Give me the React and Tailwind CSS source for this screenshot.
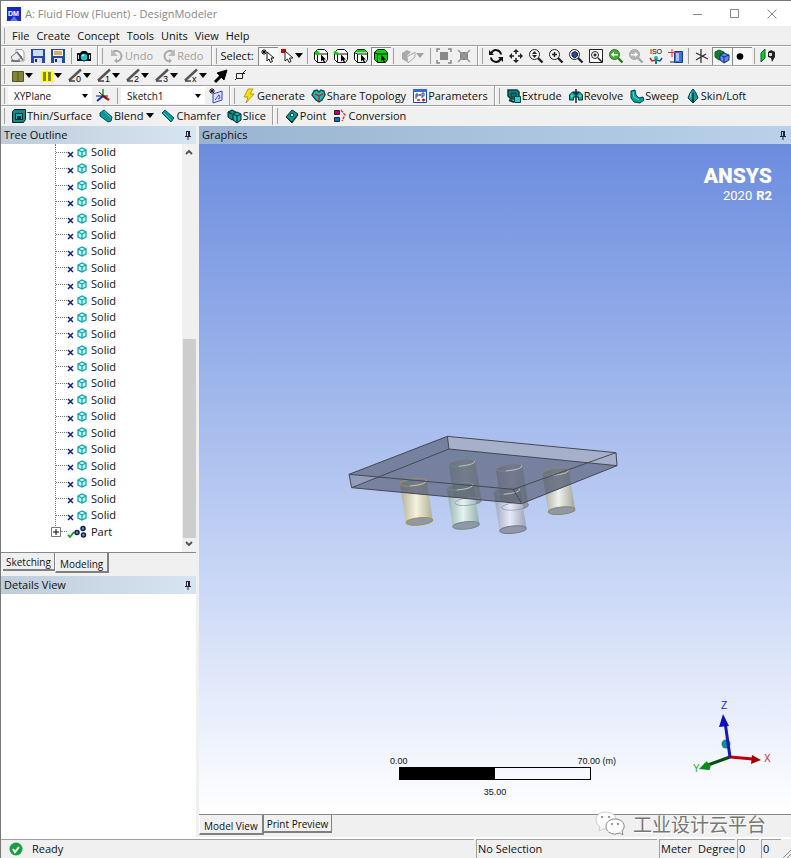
import React, { useState } from 'react';
import clsx from 'clsx';

const Icon = ({ children, size = 16 }) => (
  <svg width={size} height={size} viewBox="0 0 16 16" fill="none" aria-hidden="true" className="shrink-0">
    {children}
  </svg>
);

const Caret = ({ color = '#000' }) => (
  <svg width="8" height="5" viewBox="0 0 8 5" aria-hidden="true" className="shrink-0">
    <path d="M0 0h8L4 5z" fill={color} />
  </svg>
);

const Lens = ({ children, color = '#222', fill = '#f8f8f8' }) => (
  <Icon>
    <path d="M10 10l4.5 4.5" stroke={color} strokeWidth="2.4" />
    <circle cx="6.5" cy="6.5" r="5" fill={fill} stroke={color} />
    {children}
  </Icon>
);

const CubeSelect = ({ mode }) => (
  <Icon>
    <path d="M1.5 4.5l3-3h7l3 3v7l-2 3h-8l-3-3z" fill={mode === 'body' ? '#00d800' : '#fff'} stroke="#111" />
    {mode === 'face' && <path d="M2 4L4.500 2h7l2.500 2.500H5z" fill="#00e000" />}
    <path d="M1.500 4.500l3 1.500h10M4.500 6v8.500" stroke="#111" />
    {mode === 'vertex' && <circle cx="4" cy="5" r="2.200" fill="#00d800" />}
    {mode === 'edge' && <path d="M1 4l4 2" stroke="#00d800" strokeWidth="3" />}
    <path d="M8 6.500v7l1.500-1.500 1.500 2.500 1-.5-1-2.500h2z" fill="#000" />
  </Icon>
);

const LineIcon = ({ label }) => (
  <Icon>
    <path d="M1 12.500L13 1.500" stroke="#555" strokeWidth="2.400" />
    <path d="M1 13h6" stroke="#444" strokeWidth="1.500" />
    <text x="8" y="14" fontSize="9" fontFamily="Liberation Sans, sans-serif" fill="#000">{label}</text>
  </Icon>
);

const icons = {
  newSketch: <Icon><path d="M6 1.500h6l2 2.500v9H6z" fill="#fff" stroke="#99a" /><path d="M1 9l6-5 5 5-5 4H3z" fill="#eaeaf0" stroke="#777" /><path d="M7 4l6 8M1 13h9" stroke="#666" strokeWidth="1.500" /></Icon>,
  save: <Icon><path d="M1 1h14v14H1z" fill="#2449a8" /><path d="M3 2h10v6H3z" fill="#c9dcf6" /><path d="M4 10h8v5H4z" fill="#dde" /><path d="M5 11h2v3H5z" fill="#234" /></Icon>,
  saveAs: <Icon><path d="M1 1h14v14H1z" fill="#2449a8" /><path d="M3 2h10v6H3z" fill="#fff3d2" /><path d="M4 4h8M4 6h8" stroke="#b65a28" /><path d="M4 10h8v5H4z" fill="#dde" /><path d="M5 11h2v3H5z" fill="#234" /></Icon>,
  camera: <Icon><path d="M1 5h3l2-2h4l2 2h3v8H1z" fill="#111" /><circle cx="8" cy="9" r="4" fill="#16c6cf" stroke="#000" /><path d="M6 8l2-1" stroke="#fff" /><path d="M2.500 7v4M13.500 7v4" stroke="#ddd" /></Icon>,
  undo: <Icon><path d="M4 4a5.300 5.300 0 1 1 3 9.500" stroke="#aaa" strokeWidth="2" /><path d="M2 1v7h7z" fill="#bbb" /><path d="M8 10l-3 3 3 2z" fill="#aaa" /></Icon>,
  redo: <Icon><path d="M12 4a5.300 5.300 0 1 0-3 9.500" stroke="#aaa" strokeWidth="2" /><path d="M14 1v7H7z" fill="#bbb" /><path d="M8 10l3 3-3 2z" fill="#aaa" /></Icon>,
  selectMode: <Icon><path d="M4 1v6M1 4h6M2 2l4 4M6 2L2 6" stroke="#000" /><path d="M7 4v9l2-2 1.500 3.500 2-1L11 10h3z" fill="#fff" stroke="#111" /></Icon>,
  pick: <Icon><path d="M1 1h5v4H1z" fill="#d00000" /><path d="M5 3v10l2.500-2L9 14.500l2-1L9.500 10H13z" fill="#fff" stroke="#222" /></Icon>,
  extend: <Icon><path d="M1 5l5-3 4 2-4 4v6l-5-3z" fill="#aaa" /><path d="M6 9l8-5v5l-7 6z" fill="#eee" stroke="#aaa" /></Icon>,
  blockA: <Icon><path d="M4 4h8v8H4z" fill="#888" /><path d="M1 4V1h3M12 1h3v3M15 12v3h-3M4 15H1v-3" stroke="#888" strokeWidth="1.500" /></Icon>,
  blockB: <Icon><path d="M4 4h8v8H4z" fill="#888" /><path d="M2 2l12 12M14 2L2 14" stroke="#999" strokeWidth="1.500" /></Icon>,
  rotate: <Icon><path d="M13 6.500A5 5 0 0 0 3.500 5M3 9.500A5 5 0 0 0 12.500 11" stroke="#111" strokeWidth="2" /><path d="M1 2v5h5zM15 14V9h-5z" fill="#111" /></Icon>,
  pan: <Icon><path d="M8 3v3M8 10v3M3 8h3M10 8h3" stroke="#222" strokeWidth="1.500" /><path d="M8 1l3 3H5zM8 15l3-3H5zM1 8l3-3v6zM15 8l-3-3v6z" fill="#222" /></Icon>,
  zoom: <Lens><path d="M6.500 3L9 6H4zM6.500 10L4 7h5z" fill="#222" /></Lens>,
  zoomIn: <Lens><path d="M6.500 4v5M4 6.500h5" stroke="#222" strokeWidth="1.500" /></Lens>,
  zoomFit: <Lens><path d="M4 5l3-1.500L9.500 5v3L6.500 10 4 8z" fill="#2749ad" stroke="#123" /></Lens>,
  zoomBox: <Icon><path d="M1.500 1.500h13v13h-13z" fill="#fff" stroke="#222" /><circle cx="7" cy="7" r="3.500" stroke="#222" /><path d="M5.500 7h3M7 5.500v3M10 10l4 4" stroke="#222" strokeWidth="1.500" /></Icon>,
  prev: <Lens color="#287d20" fill="#4aa83d"><path d="M3 6.500L6 4v2h4v1.500H6V9z" fill="#fff" /></Lens>,
  next: <Lens color="#a5a5a5" fill="#b5b5b5"><path d="M10 6.500L7 4v2H3v1.500h4V9z" fill="#fff" /></Lens>,
  iso: <Icon><text x="2" y="6" fontSize="7" fontFamily="Liberation Sans, sans-serif" fill="#000">ISO</text><path d="M8 12l-4 1-2-3" stroke="#cc2020" strokeWidth="1.500" /><path d="M8 12l4 1 2-3" stroke="#2040c0" strokeWidth="1.500" /><circle cx="8" cy="10" r="2" fill="#11b8aa" /><path d="M8 11v5" stroke="#087" strokeWidth="2" /></Icon>,
  lookAt: <Icon><path d="M6.500 3.500h8v11h-8z" fill="#4a70ce" stroke="#123a9a" /><path d="M8 5h3v8H8z" fill="#a9c2f2" /><path d="M4 1v8M0 4.500h9" stroke="#d33" /><path d="M2 14h5" stroke="#222" /></Icon>,
  axes: <Icon><path d="M7 1v14M2 12l10-6M2 5l12 6" stroke="#333" strokeWidth="1.300" /></Icon>,
  bodies: <Icon><path d="M1 4l4-2 5 2v6l-5 2-4-3z" fill="#157b2c" stroke="#062" /><path d="M6 7l4-2 5 2v5l-5 3-4-3z" fill="#5d8be8" stroke="#102e7e" /><path d="M6 7l4 2 5-2M10 9v6" stroke="#102e7e" /></Icon>,
  dot: <Icon><circle cx="6" cy="8.500" r="3.300" fill="#000" /></Icon>,
  faces: <Icon><path d="M1 5l4-4v9l-4 4z" fill="#12cc20" stroke="#153" /><path d="M8 4l3-2 4 2v5l-3 5-1-4-3-1z" fill="#222" /><path d="M9 5h3v3H9z" fill="#ddd" /></Icon>,
  plane: <Icon><path d="M8 8V1" stroke="#10a020" strokeWidth="1.500" /><path d="M8 8l-6 5" stroke="#1030d0" strokeWidth="2" /><path d="M8 8l6 4" stroke="#e01010" strokeWidth="2.500" /><path d="M4 4l8 7M1 8h12" stroke="#222" /></Icon>,
  sketchNew: <Icon><path d="M5 6l9-3v9l-9 3z" fill="#dfe3ff" stroke="#3640cc" /><path d="M7 12l4-5M10 7a2 2 0 1 1 0 4" stroke="#3640cc" /><path d="M4 0v6M1 3h6M2 1l4 4M6 1L2 5" stroke="#111" /></Icon>,
  generate: <Icon><path d="M7 1h5L9 6h4l-8 9 2-6H3z" fill="#ffdf00" stroke="#9b8000" strokeWidth=".7" /></Icon>,
  share: <Icon><path d="M3 3l3-1 2 2 2-2 3 1 1 4-3 5-3 2-3-2-4-5z" fill="#16c0bb" stroke="#034c50" strokeWidth="1.400" /><path d="M4 6l4 2 4-2M8 8v5" stroke="#d02020" strokeWidth="1.500" /></Icon>,
  params: <Icon><path d="M1.500 1.500h13v13h-13z" fill="#fff" stroke="#1745c0" /><path d="M1 1h14v3H1z" fill="#3468dc" /><path d="M4 11V6h2v2H4M10 10V5h2v3h-2" stroke="#1745c0" /><path d="M7 7h2M5 12h3M10 12h3M11.500 10.500v3" stroke="#d01010" strokeWidth="1.500" /></Icon>,
  extrude: <Icon><path d="M2 2h9l2 2v7H5l-3-3z" fill="#0b8585" stroke="#013b3b" strokeWidth="1.500" /><path d="M5 5h5v4H5z" fill="#087070" stroke="#013b3b" /><path d="M8.500 8.500h6v6h-6z" fill="#19d5d5" stroke="#013b3b" /><path d="M3 12l5 2" stroke="#013b3b" strokeWidth="2" /></Icon>,
  revolve: <Icon><path d="M1.500 12V7l3-3h7l3 3v5h-4V9h-5v3z" fill="#0eb0b0" stroke="#034" /><path d="M8 1v14M5 4l3 3 3-3" stroke="#033" strokeWidth="1.500" /><path d="M3 8h2M11 8h2" stroke="#7ff" /></Icon>,
  sweep: <Icon><path d="M2 3l4-1 1 5 3 3 4-1 1 3-4 3-6-1-3-4z" fill="#0e9c9c" stroke="#034040" /><path d="M4 4l1 5 5 3" stroke="#4ee" /></Icon>,
  loft: <Icon><path d="M8 1l3 4 2 5-5 5-5-5 2-5z" fill="#0e9c9c" stroke="#034040" /><path d="M8 5v10" stroke="#023" strokeWidth="1.500" /><path d="M6 5l-1 5" stroke="#6ee" /></Icon>,
  thin: <Icon><path d="M1.500 3.500l2-2h11v10l-2 3h-11z" fill="#0e8c8c" stroke="#022" /><path d="M4.500 5.500h7v6h-7z" fill="#13b5b5" stroke="#022" /><path d="M6 8h4v3H6z" fill="#034" /></Icon>,
  blend: <Icon><path d="M2 5l4-3 8 7-1 4-3 1-8-6z" fill="#129797" stroke="#056" /><path d="M6 3l7 7" stroke="#3cc" /></Icon>,
  chamfer: <Icon><path d="M2 5l3-3 9 8-3 4z" fill="#129797" stroke="#056" /><path d="M4 5l7 7" stroke="#3cc" /></Icon>,
  slice: <Icon><path d="M1 4l4-2 4 2v6l-4 2-4-3z" fill="#0e8c8c" stroke="#022" /><path d="M6 6l4-2 4 2v6l-4 3-4-3z" fill="#15b5b5" stroke="#022" /><path d="M6 6l4 2 4-2M10 8v7M1 4l4 2" stroke="#022" /></Icon>,
  point: <Icon><path d="M2 9l6-7 6 4-6 8z" fill="#129797" stroke="#033" /><path d="M3 10l5 5 6-8" stroke="#033" /><circle cx="8" cy="7" r="1.800" fill="#bff" stroke="#033" /></Icon>,
  conversion: <Icon><path d="M1.500 2.500h5v4h-5z" fill="#c00070" stroke="#222" /><path d="M1.500 9.500h5v4h-5z" fill="#0870d0" stroke="#222" /><path d="M8 2l4 5-3 6" stroke="#f02020" strokeWidth="1.300" strokeDasharray="3 1" /></Icon>,
  vertex: <CubeSelect mode="vertex" />,
  edge: <CubeSelect mode="edge" />,
  face: <CubeSelect mode="face" />,
  body: <CubeSelect mode="body" />,
  faceColor: <Icon><path d="M2.500 3.500h11v10h-11z" fill="#85853a" stroke="#55551a" /><path d="M8 3v11" stroke="#55551a" /></Icon>,
  edgeColor: <Icon><path d="M2 3h12v11H2z" fill="#ff0" /><path d="M4 4h3v9H4zM9 4h3v9H9z" fill="#85853a" /></Icon>,
  line0: <LineIcon label="0" />,
  line1: <LineIcon label="1" />,
  line2: <LineIcon label="2" />,
  line3: <LineIcon label="3" />,
  lineX: <LineIcon label="x" />,
  arrow: <Icon><path d="M2 14l6-6" stroke="#000" strokeWidth="3" /><path d="M14 2l-3 10-3-3-4-4z" fill="#000" stroke="#000" /></Icon>,
  vertices: <Icon><path d="M3.500 5.500h6v5h-6zM9 6l4-4M4 10l-2 2M9 5.500h3" stroke="#222" /></Icon>,
};

const Separator = () => (
  <span className="flex h-4 w-[6px] shrink-0 justify-center"><span className="w-px bg-[#a0a0a0]" /></span>
);

const Handle = () => (
  <span className="mx-[3px] h-4 w-px shrink-0 bg-[#a0a0a0]" />
);

// end of one docked toolbar and the grip of the next
const Divider = () => (
  <span className="flex h-full shrink-0 items-center pl-[3px]">
    <span className="h-full w-[2px] border-l border-[#a0a0a0] bg-white" />
    <Handle />
  </span>
);

const ToolButton = ({ icon, label, text, drop, pressed, disabled }) => (
  <button
    type="button"
    aria-label={label || text}
    disabled={disabled}
    className={clsx(
      'flex h-[18px] shrink-0 items-center',
      text ? 'px-[3px]' : 'px-[2px]',
      pressed && 'bg-[#f8f8f8] shadow-[inset_1px_1px_0_#888]',
      disabled && 'text-[#a0a0a0]'
    )}
  >
    {icons[icon]}
    {text && <span>{text}</span>}
    {drop && <span className={clsx('flex', text ? 'pl-[3px]' : '-ml-px')}><Caret color={disabled ? '#a0a0a0' : '#000'} /></span>}
  </button>
);

const Toolbar = ({ label, children }) => (
  <div role="toolbar" aria-label={label} className="flex h-5 shrink-0 items-center overflow-hidden border-t border-[#a0a0a0] shadow-[inset_0_1px_0_#fff]">
    <Handle />
    {children}
  </div>
);

const PickList = ({ label, options }) => (
  <span className="relative flex h-[17px] w-[84px] shrink-0 items-center bg-white">
    <select aria-label={label} className="h-full w-full appearance-none bg-transparent pl-[6px] text-[10px] leading-4 outline-none">
      {options.map(o => <option key={o}>{o}</option>)}
    </select>
    <span className="pointer-events-none absolute right-1"><svg width="6" height="4" viewBox="0 0 6 4" aria-hidden="true"><path d="M0 0h6L3 4z" fill="#000" /></svg></span>
  </span>
);

const Pin = () => (
  <button type="button" aria-label="Auto hide">
    <svg width="8" height="10" viewBox="0 0 8 10" fill="none" aria-hidden="true">
      <path d="M2.500 1v5M5.500 1v5M2 1.500h4M1 6.500h6M4 7v3" stroke="#223" />
      <path d="M4.500 1v5" stroke="#223" />
    </svg>
  </button>
);

const PanelHeader = ({ title, active }) => (
  <div className={clsx(
    'flex h-[18px] shrink-0 items-center justify-between pl-[3px] pr-1',
    active ? 'bg-linear-to-r from-[#99b4d1] to-[#b9d1ea]' : 'bg-linear-to-r from-[#bfcddb] to-[#d7e4f2]'
  )}>
    <h2>{title}</h2>
    <Pin />
  </div>
);

const SolidRow = () => (
  <li className="flex flex-1 items-center">
    <span className="ml-[55px] w-[11px] border-t border-dotted border-[#777]" />
    <svg width="7" height="7" viewBox="0 0 7 7" fill="none" aria-hidden="true" className="mt-1">
      <path d="M1 1l5 5M6 1L1 6" stroke="#10208c" strokeWidth="1.500" />
    </svg>
    <svg width="10" height="11" viewBox="0 0 10 11" fill="none" aria-hidden="true" className="ml-[3px]">
      <path d="M1 3l4-2 4 2v5l-4 2-4-2z" fill="#c9ffff" stroke="#10a5ad" strokeWidth="1.300" />
      <path d="M1 3l4 2 4-2M5 5v5" stroke="#10a5ad" strokeWidth="1.300" />
    </svg>
    <span className="ml-1">Solid</span>
  </li>
);

const TreeOutline = () => (
  <div className="flex h-[409px] shrink-0 border-b border-[#888] bg-white">
    <div className="relative flex-1">
      <span className="absolute left-[54px] top-0 h-[382px] border-l border-dotted border-[#777]" />
      <ul className="flex h-[396px] flex-col">
        {Array.from({ length: 23 }, (_, i) => <SolidRow key={i} />)}
        <li className="flex flex-1 items-center">
          <button type="button" aria-label="Expand Part" className="relative ml-[50px] flex">
            <svg width="10" height="10" viewBox="0 0 10 10" aria-hidden="true">
              <path d="M.5.5h9v9h-9z" fill="#fff" stroke="#777" /><path d="M2 5h6M5 2v6" stroke="#000" />
            </svg>
          </button>
          <span className="w-[6px] border-t border-dotted border-[#777]" />
          <svg width="20" height="14" viewBox="0 0 20 14" fill="none" aria-hidden="true">
            <path d="M1 10l2 2 4-5" stroke="#10a020" strokeWidth="1.800" />
            <g fill="#6d8fc8" stroke="#111f44" strokeWidth="1.500">
              <circle cx="10" cy="7.500" r="2" /><circle cx="16" cy="3.500" r="2" /><circle cx="16.500" cy="10" r="2" />
            </g>
          </svg>
          <span className="ml-1">Part</span>
        </li>
      </ul>
    </div>
    <div className="flex w-[14px] flex-col items-center bg-[#f0f0f0] py-1" aria-hidden="true">
      <svg width="8" height="8" viewBox="0 0 8 8" fill="none"><path d="M1 6l3-3 3 3" stroke="#505050" strokeWidth="1.800" /></svg>
      <span className="mt-[183px] w-[13px] flex-1 bg-[#cdcdcd]" />
      <svg width="8" height="8" viewBox="0 0 8 8" fill="none" className="mt-[2px]"><path d="M1 2l3 3 3-3" stroke="#505050" strokeWidth="1.800" /></svg>
    </div>
  </div>
);

const TabButton = ({ active, children, onClick }) => (
  <button
    type="button"
    role="tab"
    aria-selected={active}
    onClick={onClick}
    className={clsx(
      'border-b-2 border-[#808080] text-[10px]',
      active ? 'h-5 border-l border-r-2 border-l-white bg-[#f0f0f0] px-1 pt-[3px]' : 'h-[18px] border-r px-[3px] pt-px'
    )}
  >
    <span className="block leading-[14px]">{children}</span>
  </button>
);

// axis runs from the top cap centre to the bottom cap centre
const cylinders = [
  { x: 366, y: 113, fill: 'url(#green)', edge: '#6f8f80' },
  { x: 507, y: 127, fill: 'url(#violet)', edge: '#83808c' },
  { x: 220, y: 172, fill: 'url(#yellow)', edge: '#a09248' },
  { x: 360, y: 184, fill: 'url(#green)', edge: '#6f8f80' },
  { x: 501, y: 197, fill: 'url(#violet)', edge: '#77778c' },
  { x: 647, y: 140, fill: 'url(#sand)', edge: '#8c8560' },
];

const barrel = (x, y) =>
  `M${x - 40} ${y + 5}L${x - 22} ${y + 122}Q${x + 18} ${y + 134} ${x + 58} ${y + 112}L${x + 40} ${y - 5}Q${x} ${y - 17} ${x - 40} ${y + 5}Z`;

const Shade = ({ id, side, mid }) => (
  <linearGradient id={id}>
    <stop offset="0" stopColor={side} />
    <stop offset=".5" stopColor={mid} />
    <stop offset="1" stopColor={side} />
  </linearGradient>
);

const Model = () => (
  <svg width="290" height="120" viewBox="0 0 870 360" fill="none" role="img" aria-label="Solid model" className="absolute left-[141px] top-[281px]">
    <defs>
      <Shade id="green" side="#93aeb0" mid="#e4f4ee" />
      <Shade id="violet" side="#9ba1bb" mid="#e6eafa" />
      <Shade id="yellow" side="#b0ae94" mid="#f4f3df" />
      <Shade id="sand" side="#a3a69c" mid="#eef1ec" />
      <clipPath id="plate"><path d="M322 34L828 83 831 122 545 236 35 188 27 148z" /></clipPath>
    </defs>
    {cylinders.map(({ x, y, fill, edge }) => (
      <g key={x}>
        <path d={barrel(x, y)} fill={fill} />
        <ellipse cx={x + 18} cy={y + 117} rx="40" ry="11" transform={`rotate(-6 ${x + 18} ${y + 117})`} fill="#8f97a8" stroke={edge} strokeWidth="3" />
      </g>
    ))}
    <path d="M322 34L828 83 831 122 545 236 35 188 27 148z" fill="#676e88" fillOpacity=".78" />
    <path d="M322 34L828 83 831 122 327 72z" fill="#c8d0ea" fillOpacity=".6" />
    <path d="M27 148L116 156 35 188z" fill="#c8d0ea" fillOpacity=".35" />
    <g clipPath="url(#plate)">
      {cylinders.map(({ x, y }) => <path key={x} d={barrel(x, y)} fill="#5a6268" fillOpacity=".36" />)}
    </g>
    {cylinders.map(({ x, y, edge }) => (
      <g key={x}>
        <ellipse cx={x} cy={y} rx="40" ry="11" transform={`rotate(-6 ${x} ${y})`} stroke={edge} strokeWidth="2.500" />
        <path d={`M${x - 10} ${y + 11}Q${x + 42} ${y + 6} ${x + 38} ${y - 6}`} stroke="#c5cbc6" strokeWidth="2.500" />
      </g>
    ))}
    {cylinders.slice(0, 2).map(({ x, y }) => (
      <ellipse key={x} cx={x + 18} cy={y + 117} rx="40" ry="11" transform={`rotate(-6 ${x + 18} ${y + 117})`} stroke="#8a9294" strokeWidth="2" />
    ))}
    <path d="M322 34L828 83 831 122 545 236 35 188 27 148zM322 34l5 38 504 50M327 72L35 188M27 148L520 193 828 83M520 193l25 43" stroke="#454953" strokeWidth="3" />
  </svg>
);

const ScaleBar = () => (
  <div className="absolute left-[191px] top-[611px] w-[240px] font-[Liberation_Sans,sans-serif] text-[9px] leading-3">
    <div className="flex justify-between pr-[14px]"><span>0.00</span><span>70.00 (m)</span></div>
    <div className="ml-[9px] flex h-[13px] w-[192px] border border-black">
      <span className="w-1/2 bg-black" />
    </div>
    <p className="mt-[6px] w-[210px] text-center">35.00</p>
  </div>
);

const Triad = () => (
  <svg width="90" height="80" viewBox="0 0 90 80" fill="none" role="img" aria-label="Axis triad" className="absolute bottom-[34px] right-[14px] font-[Liberation_Sans,sans-serif]">
    <circle cx="39" cy="44" r="4.500" fill="#138a9a" />
    <path d="M43 57L21 65" stroke="#064d10" strokeWidth="3" />
    <path d="M43 57l23 2" stroke="#c00000" strokeWidth="3" />
    <path d="M43 57L38 22" stroke="#1818b8" strokeWidth="3" />
    <path d="M36 14l-4 13 10-1z" fill="#1010c0" />
    <path d="M74 60l-9-5-1 9z" fill="#a00000" />
    <path d="M12 69l8-8 3 9z" fill="#0a8a18" />
    <circle cx="20" cy="66" r="3.500" fill="#0a8a18" />
    <text x="34" y="9" fontSize="10" fill="#2020ff">Z</text>
    <text x="77" y="62" fontSize="10" fill="#e02020">X</text>
    <text x="6" y="72" fontSize="10" fill="#20b020">Y</text>
  </svg>
);

const Watermark = () => (
  <div className="pointer-events-none absolute bottom-[1px] right-[25px] flex items-center gap-2">
    <svg width="30" height="25" viewBox="0 0 30 25" aria-hidden="true">
      <path d="M11 1C5 1 1 4 1 9c0 3 2 5 4 7l-1 4 4-2c8 1 13-3 13-9 0-5-4-8-10-8z" fill="#fff" stroke="#ccc" />
      <path d="M20 8c-5 0-9 3-9 7.500S15 23 20 23l5-1 3 2-1-4c5-5 1-12-7-12z" fill="#fff" stroke="#888" />
      <g fill="#777"><circle cx="7" cy="6" r="1" /><circle cx="14" cy="6" r="1" /><circle cx="17" cy="13" r="1" /><circle cx="23" cy="13" r="1" /></g>
    </svg>
    <span className="font-['Noto_Sans_CJK_SC',sans-serif] text-[19px] leading-6 text-[#777] [text-shadow:1px_1px_0_#fff]">工业设计云平台</span>
  </div>
);

const menus = ['File', 'Create', 'Concept', 'Tools', 'Units', 'View', 'Help'];

const App = () => {
  const [outlineTab, setOutlineTab] = useState('Modeling');
  const [viewTab, setViewTab] = useState('Model View');

  return (
    <div className="flex min-h-screen flex-col overflow-hidden border-l border-t border-[#777] bg-[#f0f0f0] font-['Open_Sans',sans-serif] text-[11px] leading-4 text-[#111]">
      <header className="flex h-[25px] shrink-0 items-center bg-white pl-[6px] text-[#888]">
        <svg width="14" height="14" viewBox="0 0 14 14" aria-hidden="true">
          <path d="M0 0h14v14H0z" fill="#1428c8" /><path d="M3 14l4-5 4 5z" fill="#5a78f0" />
          <text x="1" y="9" fontSize="7" fontWeight="700" fontFamily="Liberation Sans, sans-serif" fill="#fff">DM</text>
        </svg>
        <h1 className="ml-1 flex-1">A: Fluid Flow (Fluent) - DesignModeler</h1>
        <div className="flex gap-[27px] pr-[14px]">
          <button type="button" aria-label="Minimize"><svg width="10" height="10" fill="none"><path d="M0 5.500h9" stroke="#888" /></svg></button>
          <button type="button" aria-label="Maximize"><svg width="10" height="10" fill="none"><path d="M.5.5h8v8h-8z" stroke="#888" /></svg></button>
          <button type="button" aria-label="Close"><svg width="10" height="10" fill="none"><path d="M.5.5l9 9M9.500.5l-9 9" stroke="#888" /></svg></button>
        </div>
      </header>

      <nav aria-label="Main menu" className="flex h-[19px] shrink-0 items-center">
        <Handle />
        <div className="flex gap-[7px] pl-1 pt-px">
          {menus.map(m => <button key={m} type="button">{m}</button>)}
        </div>
      </nav>

      <Toolbar label="Standard">
        <ToolButton icon="newSketch" label="New" />
        <ToolButton icon="save" label="Save" />
        <ToolButton icon="saveAs" label="Export" />
        <Separator />
        <ToolButton icon="camera" label="Capture" />
        <Divider />
        <div className="flex gap-[2px] pr-[2px]">
          <ToolButton icon="undo" text="Undo" disabled />
          <ToolButton icon="redo" text="Redo" disabled />
        </div>
        <Divider />
        <span className="mr-1">Select:</span>
        <ToolButton icon="selectMode" label="New selection" pressed />
        <ToolButton icon="pick" label="Select mode" drop />
        <Separator />
        <ToolButton icon="vertex" label="Points" />
        <ToolButton icon="edge" label="Edges" />
        <ToolButton icon="face" label="Faces" />
        <ToolButton icon="body" label="Bodies" pressed />
        <Separator />
        <div className="px-[2px]">
          <ToolButton icon="extend" label="Extend selection" drop disabled />
        </div>
        <Separator />
        <ToolButton icon="blockA" label="Expand" disabled />
        <ToolButton icon="blockB" label="Shrink" disabled />
        <Divider />
        <ToolButton icon="rotate" label="Rotate" />
        <ToolButton icon="pan" label="Pan" />
        <ToolButton icon="zoom" label="Zoom" />
        <ToolButton icon="zoomIn" label="Zoom in" />
        <ToolButton icon="zoomFit" label="Zoom to fit" />
        <ToolButton icon="zoomBox" label="Magnifier" />
        <ToolButton icon="prev" label="Previous view" />
        <ToolButton icon="next" label="Next view" />
        <ToolButton icon="iso" label="Isometric view" />
        <ToolButton icon="lookAt" label="Look at" />
        <Separator />
        <ToolButton icon="axes" label="Display plane" />
        <ToolButton icon="bodies" label="Display model" pressed />
        <ToolButton icon="dot" label="Display points" pressed />
        <Separator />
        <ToolButton icon="faces" label="Face normals" />
      </Toolbar>

      <Toolbar label="Display">
        <div className="flex gap-[2px]">
          <ToolButton icon="faceColor" label="Face coloring" drop />
          <ToolButton icon="edgeColor" label="Edge coloring" drop />
          <ToolButton icon="line0" label="Free edges" drop />
          <ToolButton icon="line1" label="Single edges" drop />
          <ToolButton icon="line2" label="Double edges" drop />
          <ToolButton icon="line3" label="Triple edges" drop />
          <ToolButton icon="lineX" label="Multiple edges" drop />
          <ToolButton icon="arrow" label="Edge direction" />
        </div>
        <ToolButton icon="vertices" label="Display vertices" />
      </Toolbar>

      <Toolbar label="Features">
        <div className="flex items-center gap-px">
          <PickList label="Plane" options={['XYPlane', 'ZXPlane', 'YZPlane']} />
          <ToolButton icon="plane" label="New plane" />
          <Separator />
          <PickList label="Sketch" options={['Sketch1']} />
          <ToolButton icon="sketchNew" label="New sketch" />
        </div>
        <Divider />
        <ToolButton icon="generate" text="Generate" />
        <ToolButton icon="share" text="Share Topology" />
        <ToolButton icon="params" text="Parameters" />
        <Divider />
        <ToolButton icon="extrude" text="Extrude" />
        <ToolButton icon="revolve" text="Revolve" />
        <ToolButton icon="sweep" text="Sweep" />
        <ToolButton icon="loft" text="Skin/Loft" />
      </Toolbar>

      <Toolbar label="Modify">
        <ToolButton icon="thin" text="Thin/Surface" />
        <ToolButton icon="blend" text="Blend" drop />
        <ToolButton icon="chamfer" text="Chamfer" />
        <ToolButton icon="slice" text="Slice" />
        <Divider />
        <ToolButton icon="point" text="Point" />
        <ToolButton icon="conversion" text="Conversion" />
      </Toolbar>

      <div className="flex flex-1 gap-[3px] pt-px">
        <aside className="flex w-[195px] shrink-0 flex-col">
          <PanelHeader title="Tree Outline" />
          <TreeOutline />
          <div role="tablist" className="flex h-[23px] shrink-0 items-start pl-[2px]">
            {['Sketching', 'Modeling'].map(t => (
              <TabButton key={t} active={outlineTab === t} onClick={() => setOutlineTab(t)}>{t}</TabButton>
            ))}
          </div>
          <PanelHeader title="Details View" />
          <div className="flex-1 bg-white" />
        </aside>

        <main className="flex min-w-0 flex-1 flex-col">
          <PanelHeader title="Graphics" active />
          <div className="relative flex-1 overflow-hidden bg-linear-to-b from-[#6c8cde] to-white">
            <div className="absolute right-[19px] top-[20px] text-right font-[Roboto,sans-serif] text-white">
              <p className="text-[21px] font-black leading-6">ANSYS</p>
              <p className="flex justify-end gap-1 text-[13px] leading-4"><span>2020</span><b>R2</b></p>
            </div>
            <Model />
            <ScaleBar />
            <Triad />
          </div>
          <div className="relative flex h-[23px] shrink-0 items-start border-t border-[#888]">
            <div role="tablist" className="flex items-start">
              {['Model View', 'Print Preview'].map(t => (
                <TabButton key={t} active={viewTab === t} onClick={() => setViewTab(t)}>{t}</TabButton>
              ))}
            </div>
            <Watermark />
          </div>
        </main>
      </div>

      <footer className="flex h-[21px] shrink-0 gap-[2px] border-t-2 border-white">
        <div className="flex flex-1 items-center gap-[9px] border-t border-[#a0a0a0] pb-px pl-2">
          <svg width="14" height="14" viewBox="0 0 14 14" fill="none" aria-hidden="true">
            <circle cx="7" cy="7" r="6.500" fill="#16a040" /><path d="M4 7l2 3 4-5" stroke="#fff" strokeWidth="2" />
          </svg>
          <span>Ready</span>
        </div>
        <div className="flex w-[181px] items-center border-l border-t border-[#a0a0a0] pb-px pl-px">No Selection</div>
        <div className="flex w-[76px] items-center justify-between border-l border-t border-[#a0a0a0] pb-px pl-px"><span>Meter</span><span>Degree</span></div>
        <div className="flex w-[22px] items-center border-l border-t border-[#a0a0a0] pb-px pl-px">0</div>
        <div className="flex w-5 items-center border-l border-t border-[#a0a0a0] pb-px pl-px">0</div>
        <svg width="8" height="18" viewBox="0 0 8 18" aria-hidden="true" className="self-end"><path d="M0 18l8-8M4 18l4-4" stroke="#888" /></svg>
      </footer>
    </div>
  );
};

export default App;
